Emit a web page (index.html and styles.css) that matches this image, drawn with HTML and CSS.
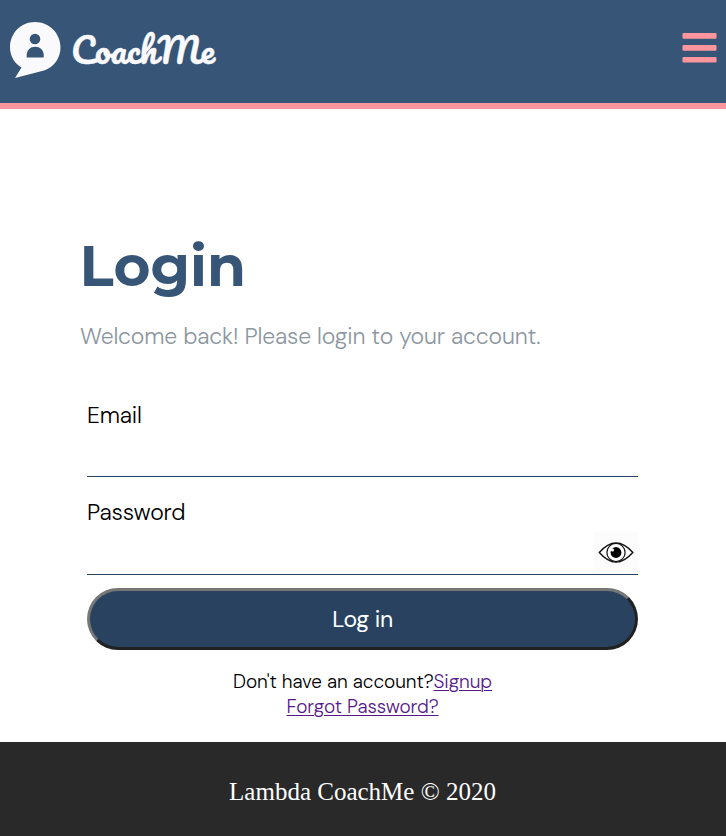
FILE: index.html
```html
<!DOCTYPE html>
<html lang="en">
<head>
<meta charset="utf-8">
<title>CoachMe</title>
<link rel="stylesheet" href="styles.css">
</head>
<body>
<header class="header">
  <div class="brand">
    <svg class="bubble" width="52" height="58" viewBox="0 0 52 58">
      <path fill="#fafafd" d="M26 1C12 1 1 12 1 26.500C1 35 6 43 12.500 46.500L6 57L35 49.500C45 46 51.500 37 51.500 26.500C51.500 12 40 1 26 1Z"/>
      <circle cx="26" cy="18" r="5.300" fill="#375577"/>
      <path fill="#375577" d="M17.700 36.500V34C17.700 29 21.500 25.700 26.200 25.700S34.700 29 34.700 34V36.500Z"/>
    </svg>
    <svg class="wordmark" width="150" height="50" viewBox="0 0 150 50">
      <text x="-1" y="40.500" textLength="144" lengthAdjust="spacingAndGlyphs">CoachMe</text>
    </svg>
  </div>
  <svg class="menu" width="36" height="32" viewBox="0 0 36 32">
    <g fill="#ff969e"><rect x="0.500" y="1" width="34" height="5.700" rx="1.200"/><rect x="0.500" y="13" width="34" height="5.700" rx="1.200"/><rect x="0.500" y="25" width="34" height="5.500" rx="1.200"/></g>
  </svg>
</header>
<main class="main">
  <h1 class="title"><span>Login</span></h1>
  <p class="intro">Welcome back! Please login to your account.</p>
  <form class="form">
    <label class="field email"><span>Email</span><input type="email"></label>
    <label class="field password"><span>Password</span>
      <span class="entry"><input type="password">
        <svg class="eye" width="44" height="41" viewBox="0 0 44 41">
          <rect width="44" height="41" fill="#fcfcfc"/>
          <path d="M5.300 20.500Q22 1.500 38.800 20.500Q22 39.500 5.300 20.500Z" fill="#fff" stroke="#111" stroke-width="1.400"/>
          <circle cx="22" cy="20.500" r="9.100" fill="#fff" stroke="#111" stroke-width="1.200"/>
          <circle cx="22" cy="20.500" r="5.400"/>
          <circle cx="18.500" cy="18" r="1.500" fill="#fff"/>
        </svg>
      </span>
    </label>
    <button class="submit" type="button">Log in</button>
  </form>
  <div class="links">
    <p>Don't have an account?<a href="#">Signup</a></p>
    <p><a href="#">Forgot Password?</a></p>
  </div>
</main>
<footer class="footer">Lambda CoachMe © 2020</footer>
</body>
</html>
```
FILE: styles.css
```css
* { box-sizing: border-box; }
body { margin: 0; height: 836px; display: flex; flex-direction: column; overflow: hidden; background: #fff; font-family: "DM Sans", Inter, sans-serif; font-weight: 330; font-variation-settings: "opsz" 14; color: #000; }
p, h1 { margin: 0; }
.header { height: 109px; flex: none; background: #375577; border-bottom: 6px solid #ff969e; display: flex; justify-content: space-between; padding: 21px 8px 0 9px; }
.brand { display: flex; }
.wordmark { margin: 2px 0 0 11px; overflow: visible; }
.wordmark text { font: 400 35px Pacifico, Lato, cursive; fill: #fafafd; stroke: #fafafd; stroke-width: .4px; }
.menu { margin-top: 11px; }
.main { height: 633px; flex: none; padding: 127px 88px 0 80px; }
.title { font: 700 56.500px/60px Montserrat, Inter, sans-serif; color: #375577; white-space: nowrap; margin-left: -.5px; }
.intro { margin-top: 24px; font-size: 23px; line-height: 32px; color: #8c979f; white-space: nowrap; letter-spacing: -.17px; }
.form { margin: 47px 0 0 7px; display: flex; flex-direction: column; }
.field { display: flex; flex-direction: column; font-size: 23px; line-height: 32px; letter-spacing: -.17px; border-bottom: 1px solid #28425f; }
.email { height: 78px; }
.password { height: 98px; padding-top: 19px; }
.field input { border: 0; outline: 0; background: none; padding: 0; height: 41px; flex: 1; min-width: 0; font: inherit; }
.entry { display: flex; margin-top: 4px; }
.submit { margin-top: 13px; height: 62px; border: 3px solid; border-color: #767676 #212121 #212121 #767676; border-radius: 31px; background: #28425f; color: #fff; font: 400 23px/32px "DM Sans", Inter, sans-serif; letter-spacing: -.3px; padding: 0; }
.links { margin: 19px 0 0 7px; font-size: 19px; line-height: 25px; letter-spacing: -.08px; text-align: center; }
.links a { color: #551a8b; text-underline-offset: 2px; text-decoration-thickness: 1px; }
.footer { flex: 1; background: #292929; color: #fff; text-align: center; font: 400 25px/30px "Liberation Serif", serif; padding: 35px 1px 0 0; }
```
